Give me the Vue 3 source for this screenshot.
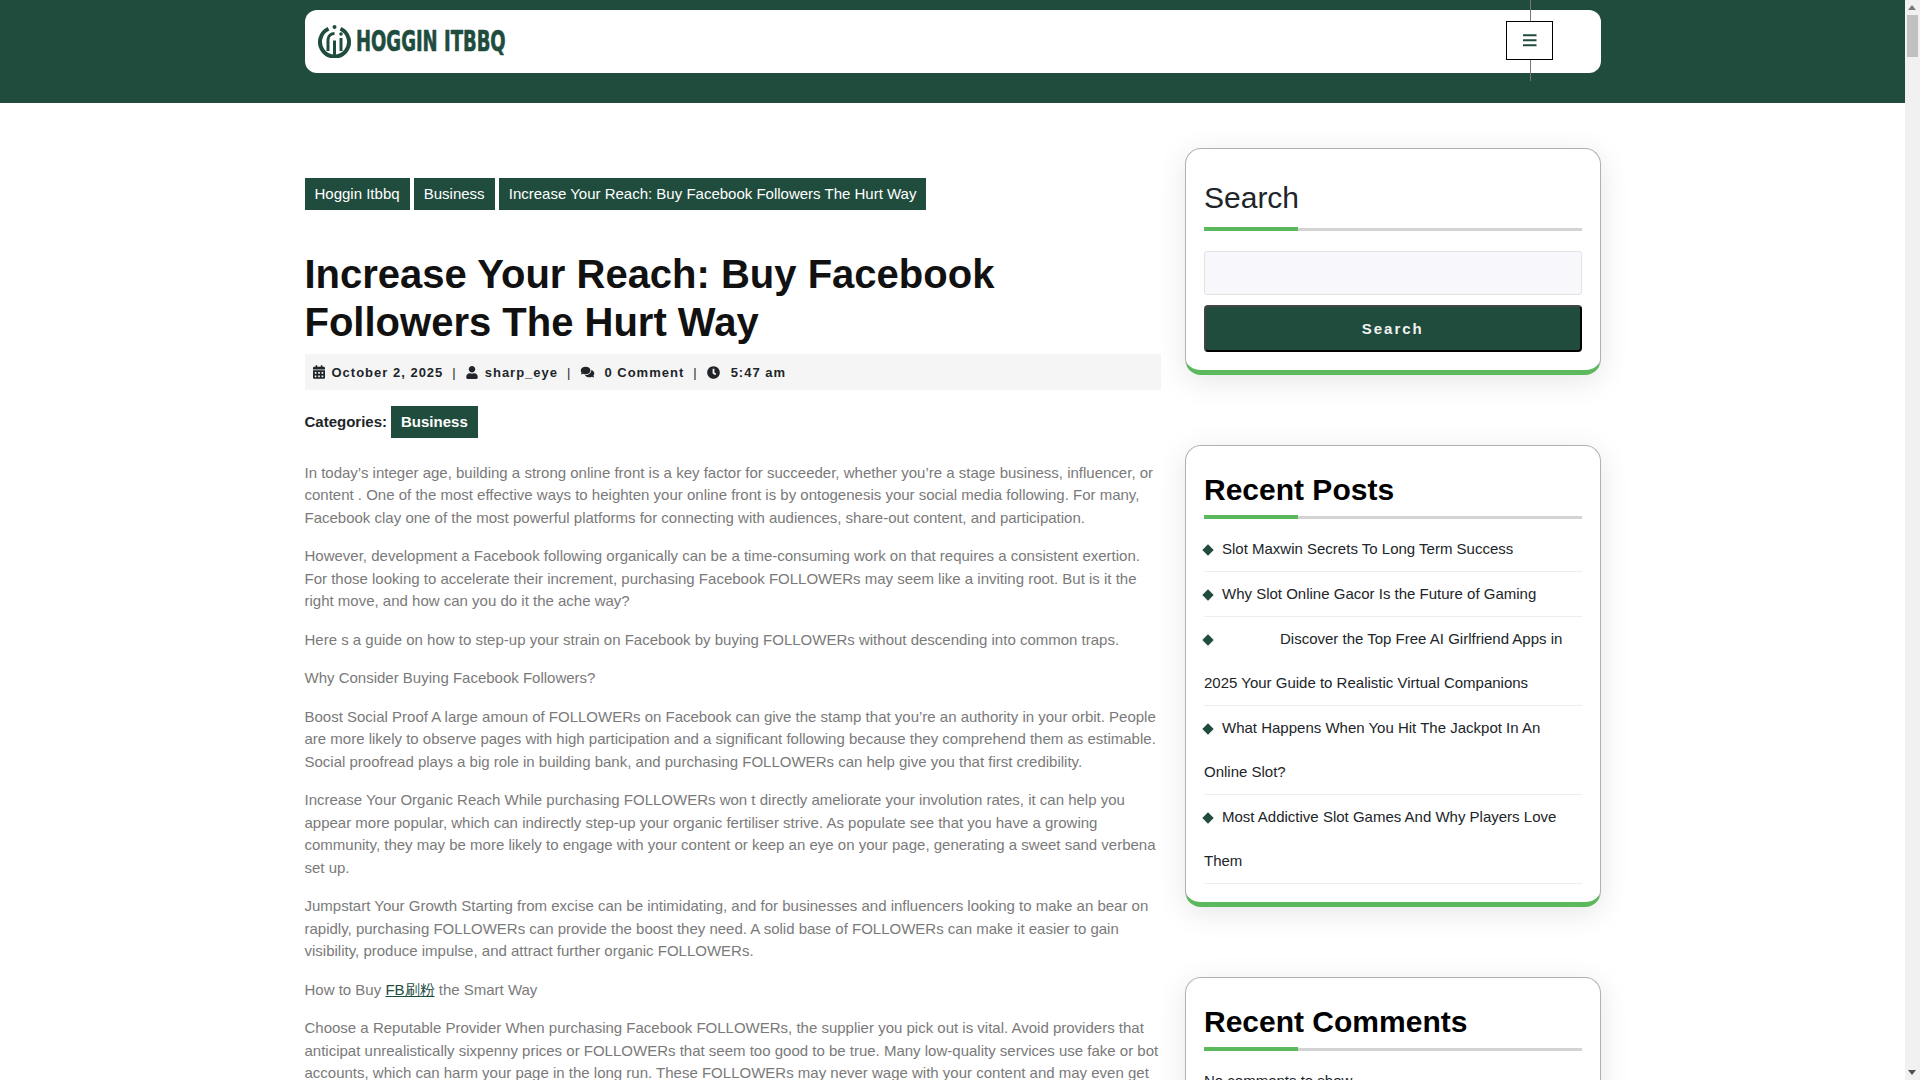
<script setup>
const crumbs = ['Hoggin Itbbq', 'Business', 'Increase Your Reach: Buy Facebook Followers The Hurt Way']
const posts = [
  { id: 1, text: 'Slot Maxwin Secrets To Long Term Success' },
  { id: 2, text: 'Why Slot Online Gacor Is the Future of Gaming' },
  { id: 3, text: 'Discover the Top Free AI Girlfriend Apps in 2025 Your Guide to Realistic Virtual Companions', gap: true },
  { id: 4, text: 'What Happens When You Hit The Jackpot In An Online Slot?' },
  { id: 5, text: 'Most Addictive Slot Games And Why Players Love Them' }
]
const paragraphs = [
  'In today’s integer age, building a strong online front is a key factor for succeeder, whether you’re a stage business, influencer, or content . One of the most effective ways to heighten your online front is by ontogenesis your social media following. For many, Facebook clay one of the most powerful platforms for connecting with audiences, share-out content, and participation.',
  'However, development a Facebook following organically can be a time-consuming work on that requires a consistent exertion. For those looking to accelerate their increment, purchasing Facebook FOLLOWERs may seem like a inviting root. But is it the right move, and how can you do it the ache way?',
  'Here s a guide on how to step-up your strain on Facebook by buying FOLLOWERs without descending into common traps.',
  'Why Consider Buying Facebook Followers?',
  'Boost Social Proof A large amoun of FOLLOWERs on Facebook can give the stamp that you’re an authority in your orbit. People are more likely to observe pages with high participation and a significant following because they comprehend them as estimable. Social proofread plays a big role in building bank, and purchasing FOLLOWERs can help give you that first credibility.',
  'Increase Your Organic Reach While purchasing FOLLOWERs won t directly ameliorate your involution rates, it can help you appear more popular, which can indirectly step-up your organic fertiliser strive. As populate see that you have a growing community, they may be more likely to engage with your content or keep an eye on your page, generating a sweet sand verbena set up.',
  'Jumpstart Your Growth Starting from excise can be intimidating, and for businesses and influencers looking to make an bear on rapidly, purchasing FOLLOWERs can provide the boost they need. A solid base of FOLLOWERs can make it easier to gain visibility, produce impulse, and attract further organic FOLLOWERs.'
]
</script>

<template>
  <div class="page">
    <header class="top">
      <div class="bar">
        <a class="logo" href="#">
          <svg width="35" height="33" viewBox="0 0 35 33" fill="none" stroke="#204c3e">
            <path d="M11.500 3.800A14.500 14.500 0 1 0 23.500 3.800" stroke-width="4" />
            <path d="M11 26V14.500a6.500 6.500 0 0 1 6.500-6" stroke-width="3" />
            <path d="M24 26V13" stroke-width="3" />
            <path d="M17.500 15.500V31" stroke-width="3" />
            <circle cx="17.500" cy="2" r="2" fill="#204c3e" stroke="none" />
            <circle cx="24" cy="9" r="1.800" fill="#204c3e" stroke="none" />
          </svg>
          <span class="logo-box"><span class="logo-text">HOGGIN ITBBQ</span></span>
        </a>
        <div class="menu-wrap">
          <span class="vline vline-top"></span>
          <button class="menu-btn" aria-label="Menu">
            <svg class="menu-ic" width="14" height="13" viewBox="0 0 14 13"><path d="M0 1.250h13.500M0 6.250h13.500M0 11.250h13.500" stroke="#204c3e" stroke-width="2.200" /></svg>
          </button>
          <span class="vline vline-bottom"></span>
        </div>
      </div>
    </header>

    <div class="layout">
      <main class="main">
        <nav class="crumbs">
          <a v-for="c in crumbs" :key="c" class="tag" href="#">{{ c }}</a>
        </nav>
        <h1 class="title">Increase Your Reach: Buy Facebook Followers The Hurt Way</h1>
        <div class="meta">
          <svg class="ic" width="12" height="14" viewBox="0 0 448 512"><path fill="#212529" d="M0 464c0 26.500 21.500 48 48 48h352c26.500 0 48-21.500 48-48V192H0v272zm320-196c0-6.600 5.400-12 12-12h40c6.600 0 12 5.400 12 12v40c0 6.600-5.400 12-12 12h-40c-6.600 0-12-5.400-12-12v-40zm0 128c0-6.600 5.400-12 12-12h40c6.600 0 12 5.400 12 12v40c0 6.600-5.400 12-12 12h-40c-6.600 0-12-5.400-12-12v-40zM192 268c0-6.600 5.400-12 12-12h40c6.600 0 12 5.400 12 12v40c0 6.600-5.400 12-12 12h-40c-6.600 0-12-5.400-12-12v-40zm0 128c0-6.600 5.400-12 12-12h40c6.600 0 12 5.400 12 12v40c0 6.600-5.400 12-12 12h-40c-6.600 0-12-5.400-12-12v-40zM64 268c0-6.600 5.400-12 12-12h40c6.600 0 12 5.400 12 12v40c0 6.600-5.400 12-12 12H76c-6.600 0-12-5.400-12-12v-40zm0 128c0-6.600 5.400-12 12-12h40c6.600 0 12 5.400 12 12v40c0 6.600-5.400 12-12 12H76c-6.600 0-12-5.400-12-12v-40zM400 64h-48V16c0-8.800-7.200-16-16-16h-32c-8.800 0-16 7.200-16 16v48H160V16c0-8.800-7.200-16-16-16h-32c-8.800 0-16 7.200-16 16v48H48C21.500 64 0 85.500 0 112v48h448v-48c0-26.500-21.500-48-48-48z" /></svg>
          <span class="mt">October 2, 2025</span><span class="sep">|</span>
          <svg class="ic" width="12" height="13" viewBox="0 0 448 512"><path fill="#212529" d="M224 256c70.700 0 128-57.300 128-128S294.700 0 224 0 96 57.300 96 128s57.300 128 128 128zm89.600 32h-16.700c-22.200 10.200-46.900 16-72.900 16s-50.600-5.800-72.900-16h-16.700C60.200 288 0 348.200 0 422.400V464c0 26.500 21.500 48 48 48h352c26.500 0 48-21.500 48-48v-41.600c0-74.200-60.200-134.400-134.400-134.400z" /></svg>
          <span class="mt">sharp_eye</span><span class="sep">|</span>
          <svg class="ic ic-chat" width="15" height="12" viewBox="0 0 576 512"><path fill="#212529" d="M416 192c0-88.400-93.100-160-208-160S0 103.600 0 192c0 34.300 14.100 65.900 38 92-13.400 30.200-35.500 54.200-35.800 54.500-2.200 2.300-2.800 5.700-1.500 8.700S4.800 352 8 352c36.600 0 66.900-12.300 88.700-25 32.200 15.700 70.300 25 111.300 25 114.900 0 208-71.600 208-160zm122 220c23.900-26 38-57.700 38-92 0-66.900-53.500-124.200-129.300-148.100.9 6.600 1.300 13.300 1.300 20.100 0 105.900-107.700 192-240 192-10.800 0-21.300-.8-31.700-1.900C207.800 439.600 281.800 480 368 480c41 0 79.100-9.200 111.300-25 21.800 12.700 52.100 25 88.700 25 3.200 0 6.100-1.900 7.300-4.800 1.300-2.900.7-6.300-1.500-8.700-.3-.3-22.400-24.200-35.800-54.500z" /></svg>
          <span class="mt">0 Comment</span><span class="sep">|</span>
          <svg class="ic ic-clock" width="13" height="13" viewBox="0 0 512 512"><path fill="#212529" d="M256 8C119 8 8 119 8 256s111 248 248 248 248-111 248-248S393 8 256 8zm57.100 350.100L224.900 294c-3.100-2.300-4.900-5.900-4.900-9.700V116c0-6.600 5.400-12 12-12h48c6.600 0 12 5.400 12 12v137.700l63.500 46.200c5.400 3.900 6.500 11.400 2.600 16.800l-28.200 38.800c-3.900 5.300-11.400 6.500-16.800 2.600z" /></svg>
          <span class="mt">5:47 am</span>
        </div>
        <div class="cats">
          <strong>Categories:</strong>
          <a class="tag tag-bold" href="#">Business</a>
        </div>
        <div class="body">
          <p v-for="(p, i) in paragraphs" :key="i">{{ p }}</p>
          <p>How to Buy <a class="inline" href="#">FB刷粉</a> the Smart Way</p>
          <p>Choose a Reputable Provider When purchasing Facebook FOLLOWERs, the supplier you pick out is vital. Avoid providers that anticipat unrealistically sixpenny prices or FOLLOWERs that seem too good to be true. Many low-quality services use fake or bot accounts, which can harm your page in the long run. These FOLLOWERs may never wage with your content and may even get your account flagged.</p>
        </div>
      </main>

      <aside class="side">
        <section class="card">
          <h2 class="card-title light"><span>Search</span></h2>
          <div class="field"></div>
          <button class="search-btn">Search</button>
        </section>
        <section class="card">
          <h2 class="card-title"><span>Recent Posts</span></h2>
          <ul class="posts">
            <li v-for="p in posts" :key="p.id">
              <i class="dia"></i><span v-if="p.gap" class="blank"></span><a href="#">{{ p.text }}</a>
            </li>
          </ul>
        </section>
        <section class="card">
          <h2 class="card-title"><span>Recent Comments</span></h2>
          <p class="none">No comments to show.</p>
        </section>
      </aside>
    </div>

    <div class="scrollbar" aria-hidden="true">
      <i class="arrow up"></i>
      <i class="thumb"></i>
      <i class="arrow down"></i>
    </div>
  </div>
</template>

<style>
html, body { margin: 0; background: #fff; }
</style>

<style scoped>
.page { width: 1905px; font-family: "Liberation Sans", Arial, sans-serif; color: #212529; font-size: 16px; }
.top { background: #204c3e; height: 103px; padding-top: 10px; box-sizing: border-box; }
.bar { box-sizing: border-box; width: 1296px; height: 63px; margin: 0 auto; background: #fff; border-radius: 12px; display: flex; align-items: center; justify-content: space-between; padding-left: 12px; }
.logo { display: flex; align-items: center; gap: 4px; text-decoration: none; margin-bottom: 1px; }
.logo-box { display: block; width: 148px; height: 32px; overflow: visible; }
.logo-text { display: inline-block; white-space: nowrap; font-family: "Liberation Sans Narrow", "DejaVu Sans Condensed", sans-serif; font-weight: 700; font-size: 29px; line-height: 32px; color: #204c3e; -webkit-text-stroke: .6px #204c3e; transform-origin: left center; transform: scaleX(.69); }
.menu-wrap { position: relative; margin: 0 48px 2px 0; }
.menu-btn { width: 47px; height: 39px; box-sizing: border-box; border: 1px solid #000; background: #fff; display: flex; align-items: center; justify-content: center; padding: 0; }
.menu-ic { margin-left: 1px; }
.vline { position: absolute; left: 24px; width: 1px; background: #777; }
.vline-top { top: -21px; height: 21px; }
.vline-bottom { bottom: -21px; height: 21px; }
.layout { display: flex; gap: 24px; margin: 0 auto; width: 1296px; padding-top: 45px; align-items: flex-start; }
.main { width: 856.500px; flex: none; padding-top: 30px; }
.crumbs { display: flex; gap: 4.170px; }
.tag { display: inline-block; background: #204c3e; color: #fff; padding: 0 10px; line-height: 32px; font-size: 15px; text-decoration: none; }
.title { margin: 40px 0 0; font-size: 40px; line-height: 48px; font-weight: 700; color: #111; }
.meta { background: #f5f5f5; height: 36px; margin-top: 8px; display: flex; align-items: center; padding-left: 8px; font-size: 13px; letter-spacing: 1px; font-weight: 700; color: #212529; }
.ic { margin-right: 7px; flex: none; }
.mt { white-space: nowrap; }
.sep { margin: 0 9px; font-weight: 400; }
.ic-chat { margin-right: 9px; }
.ic-clock { margin-right: 11px; }
.cats { margin-top: 16px; font-size: 15px; display: flex; align-items: baseline; gap: 4px; }
.tag-bold { font-weight: 700; }
.body { margin-top: 23.500px; color: #7a7a7a; font-size: 15px; line-height: 22.500px; }
.body p { margin: 0 0 16px; }
.inline { color: #204c3e; text-decoration: underline; }
.side { width: 415.500px; flex: none; display: flex; flex-direction: column; gap: 70px; }
.card { box-sizing: border-box; border: 1px solid #b5b0b0; border-bottom: 5px solid #5cb85c; border-radius: 16px; padding: 26px 18px 18px; background: #fff; box-shadow: 0 6px 30px rgba(0,0,0,.1); }
.card-title { margin: 0 0 8px; padding-bottom: 8px; font-size: 30px; line-height: 36px; font-weight: 700; color: #000; border-bottom: 3px solid #d3d3d3; position: relative; }
.card-title::after { content: ""; position: absolute; left: 0; bottom: -3px; width: 94px; height: 4px; background: #5cb85c; }
.card-title span { display: block; }
.card-title.light { margin: 5px 0 20px; padding-bottom: 12px; font-weight: 400; color: #212529; }
.field { height: 44px; box-sizing: border-box; background: #f7f7fc; border: 1px solid #e3e3e3; border-radius: 3px; }
.search-btn { display: block; margin-top: 10px; width: 100%; height: 47px; background: #204c3e; color: #f2f2f2; border: 2px solid; border-color: #444 #000 #000 #444; border-radius: 4px; font: 700 15px "Liberation Sans", sans-serif; letter-spacing: 2px; }
.posts { list-style: none; margin: 0; padding: 0; font-size: 15px; line-height: 44px; }
.posts li { border-bottom: 1px solid #eee; }
.posts a { color: #212529; text-decoration: none; }
.dia { display: inline-block; width: 8px; height: 8px; background: #204c3e; transform: rotate(45deg); margin: 0 10px 0 0; }
.blank { display: inline-block; width: 58px; }
.none { margin: 0; font-size: 15px; line-height: 44px; }
.scrollbar { position: fixed; top: 0; right: 0; bottom: 0; width: 15px; background: #f1f1f1; z-index: 10; }
.thumb { position: absolute; top: 15px; left: 2px; width: 11px; height: 42px; background: #c1c1c1; }
.arrow { position: absolute; left: 3px; width: 0; height: 0; border-left: 4.500px solid transparent; border-right: 4.500px solid transparent; }
.up { top: 5px; border-bottom: 5px solid #787878; }
.down { bottom: 5px; border-top: 5px solid #505050; }
</style>
